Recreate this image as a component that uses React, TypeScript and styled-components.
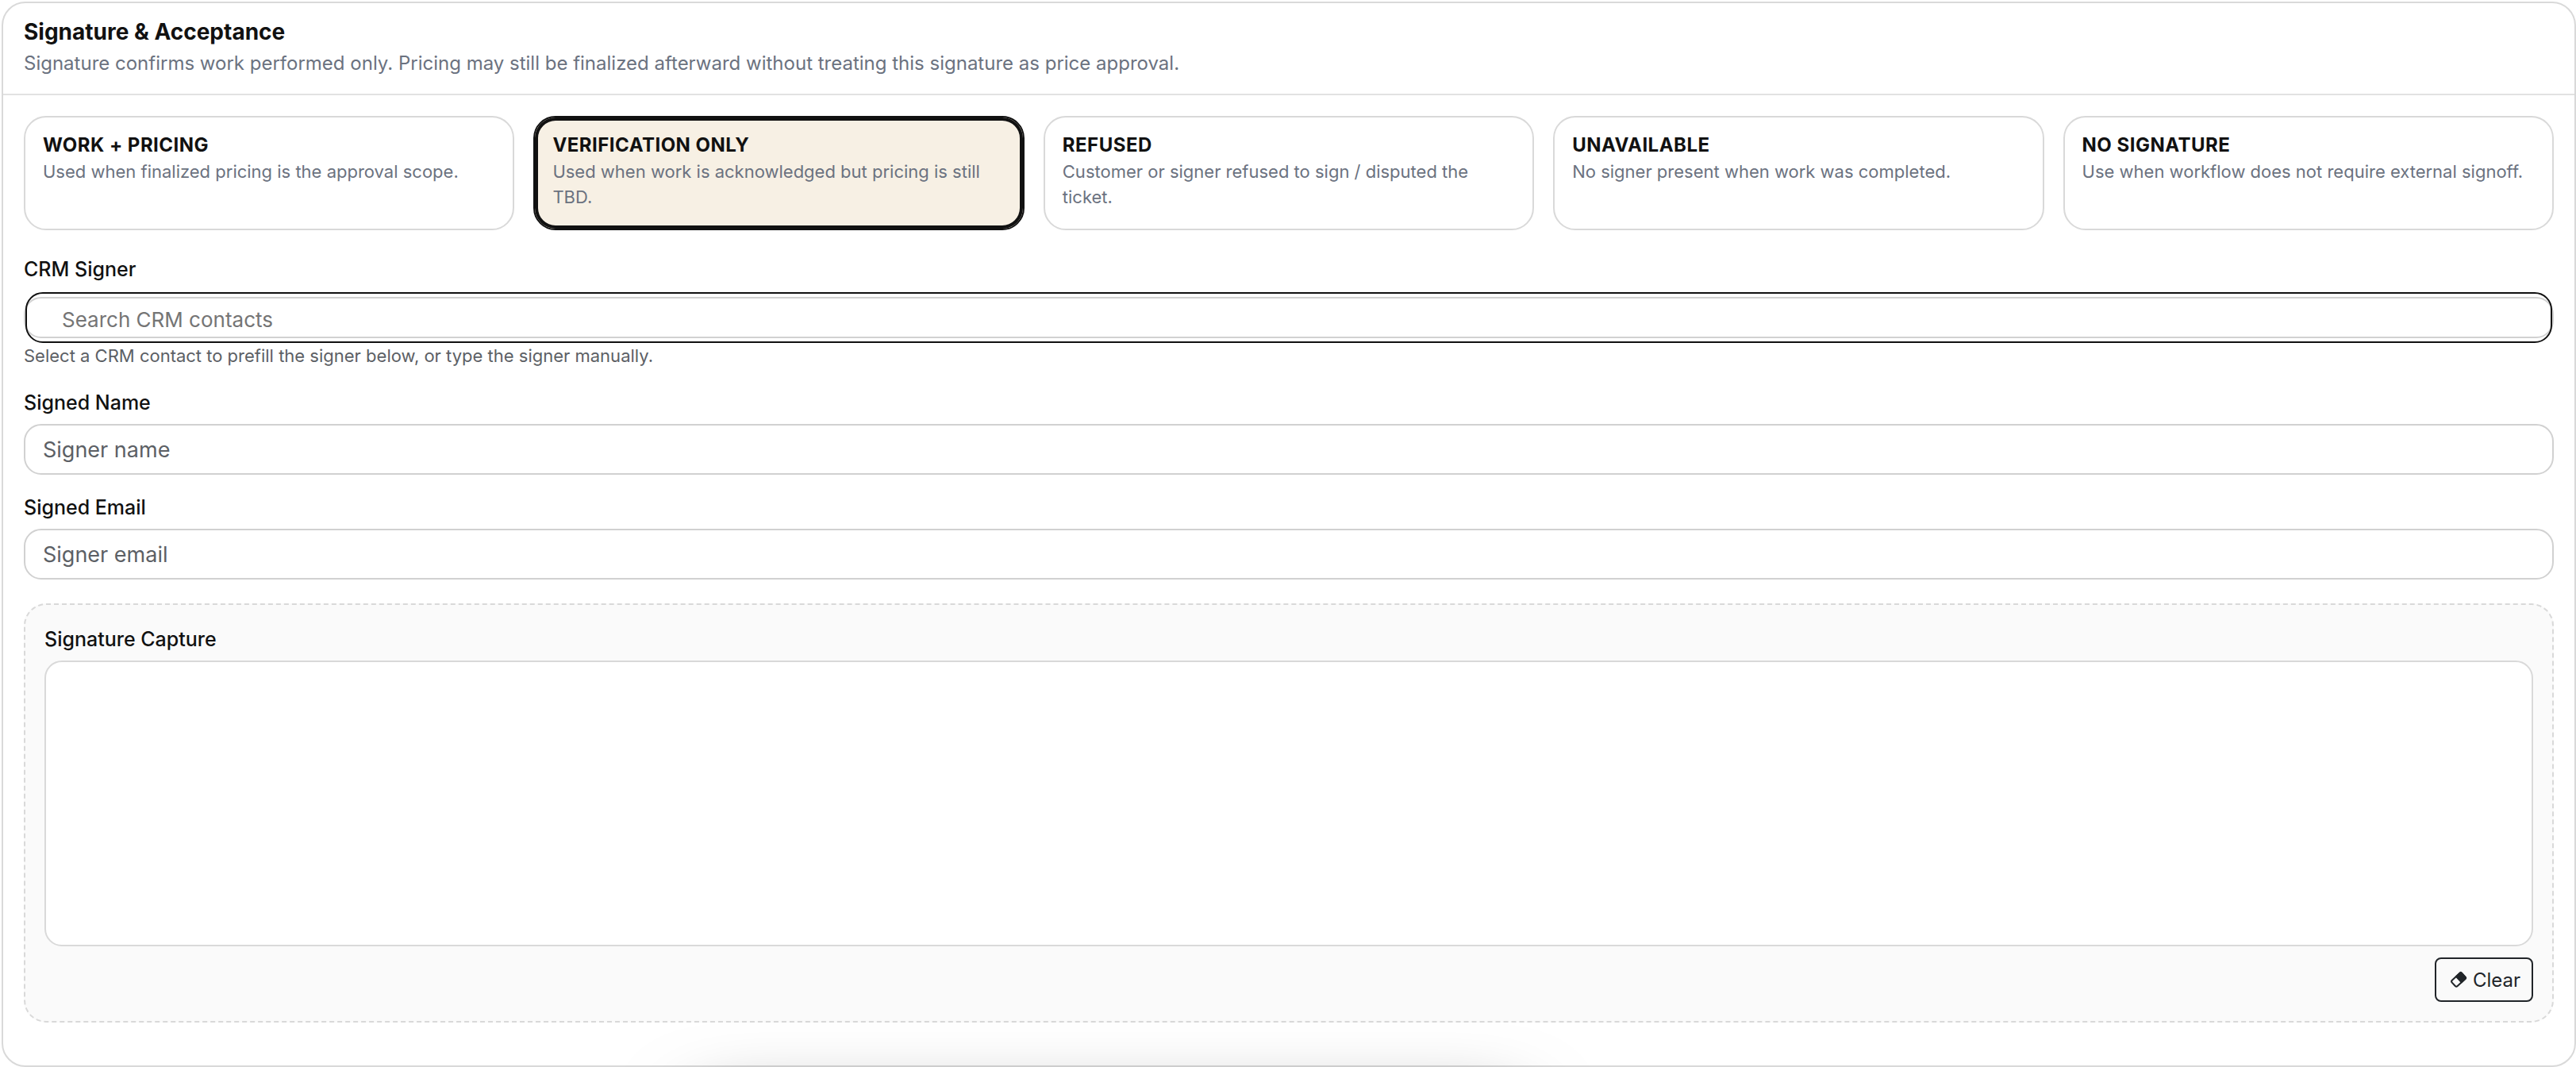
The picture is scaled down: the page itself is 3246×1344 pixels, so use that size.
import { useState } from "react";
import styled, { createGlobalStyle, css } from "styled-components";

const Ink = "#111111";
const Muted = "#6b7280";
const BorderSoft = "#d9d9d9";
const BorderInput = "#d1d1d1";

const TextS = "22px";
const TextM = "24px";
const TextLabel = "25px";
const TextL = "26px";
const TextInputSize = "27px";

const GlobalStyle = createGlobalStyle`
  *, *::before, *::after {
    box-sizing: border-box;
  }

  body {
    margin: 0;
    background: #ffffff;
    color: ${Ink};
    font-family: Inter, "Liberation Sans", sans-serif;
    font-size: ${TextM};
  }

  button, input {
    font-family: inherit;
  }
`;

const Page = styled.main`
  padding: 2px 0 0 2px;
`;

const Panel = styled.section`
  border: 2px solid ${BorderSoft};
  border-radius: 30px;
  background: #ffffff;
`;

const PanelHeader = styled.header`
  padding: 16px 26px 18px;
  border-bottom: 2px solid #e2e2e2;
`;

const Title = styled.h2`
  margin: 0;
  font-size: 28px;
  font-weight: 700;
  line-height: 40px;
`;

const Subtitle = styled.p`
  margin: 0;
  color: ${Muted};
  font-size: ${TextM};
  line-height: 40px;
`;

const PanelBody = styled.div`
  display: flex;
  flex-direction: column;
  padding: 26px 26px 54px;
`;

const Outcomes = styled.div`
  display: grid;
  grid-template-columns: repeat(5, minmax(0, 1fr));
  gap: 24px;
  margin-bottom: 8px;
`;

const OutcomeCard = styled.button<{ $selected: boolean }>`
  display: flex;
  flex-direction: column;
  justify-content: flex-start;
  min-height: 144px;
  padding: 18px 22px;
  border: 2px solid ${BorderSoft};
  border-radius: 28px;
  background: #ffffff;
  text-align: left;
  cursor: pointer;

  ${({ $selected }) =>
    $selected &&
    css`
      border-color: ${Ink};
      background: #f7f0e4;
      box-shadow: inset 0 0 0 4px ${Ink};
    `}
`;

const OutcomeTitle = styled.span`
  color: ${Ink};
  font-size: ${TextM};
  font-weight: 700;
  letter-spacing: 0.02em;
  line-height: 34px;
  text-transform: uppercase;
`;

const OutcomeText = styled.span`
  color: ${Muted};
  font-size: ${TextS};
  line-height: 32px;
`;

const Field = styled.div`
  display: flex;
  flex-direction: column;
  margin-top: 22px;
`;

const Label = styled.label`
  margin-bottom: 8px;
  font-size: ${TextLabel};
  font-weight: 500;
  line-height: 38px;
`;

const TextInput = styled.input`
  width: 100%;
  height: 64px;
  padding: 0 22px;
  border: 2px solid ${BorderInput};
  border-radius: 22px;
  background: #ffffff;
  color: ${Ink};
  font-size: ${TextInputSize};

  &::placeholder {
    color: #5c6065;
    opacity: 1;
  }
`;

const Combo = styled.div`
  display: flex;
  height: 52px;
  margin: 8px 0 6px;
  border: 2px solid ${BorderInput};
  border-radius: 22px;
`;

const ComboInput = styled(TextInput)`
  margin: -8px 0;
  padding: 4px 44px 0;
  border-color: ${Ink};
  background: transparent;
  font-size: ${TextL};

  &::placeholder {
    color: #757575;
  }
`;

const Hint = styled.p`
  margin: 0 0 2px;
  color: #5c6065;
  font-size: ${TextS};
  line-height: 32px;
`;

const Capture = styled.div`
  display: flex;
  flex-direction: column;
  margin-top: 30px;
  padding: 24px;
  border: 2px dashed ${BorderSoft};
  border-radius: 28px;
  background: #fafafa;
`;

const CaptureLabel = styled.span`
  margin-bottom: 8px;
  font-size: ${TextLabel};
  font-weight: 500;
  line-height: 38px;
`;

const Pad = styled.canvas`
  display: block;
  width: 100%;
  height: 360px;
  border: 2px solid ${BorderSoft};
  border-radius: 22px;
  background: #ffffff;
`;

const CaptureActions = styled.div`
  display: flex;
  justify-content: flex-end;
  margin-top: 14px;
`;

const ClearButton = styled.button`
  display: flex;
  align-items: center;
  gap: 6px;
  height: 56px;
  padding: 0 14px 0 16px;
  border: 2px solid #212529;
  border-radius: 8px;
  background: transparent;
  color: #212529;
  font-size: ${TextM};
  cursor: pointer;
`;

/* Floating bar docked just under the viewport, only its shadow shows. */
const DockedBar = styled.div`
  position: fixed;
  top: 100%;
  left: 27%;
  width: 32%;
  height: 200px;
  border-radius: 30px;
  box-shadow: 0 56px 96px rgba(0, 0, 0, 0.5);
  pointer-events: none;
`;

const outcomes = [
  {
    id: "work",
    title: "Work + Pricing",
    text: "Used when finalized pricing is the approval scope.",
  },
  {
    id: "verification",
    title: "Verification Only",
    text: "Used when work is acknowledged but pricing is still TBD.",
  },
  {
    id: "refused",
    title: "Refused",
    text: "Customer or signer refused to sign / disputed the ticket.",
  },
  {
    id: "unavailable",
    title: "Unavailable",
    text: "No signer present when work was completed.",
  },
  {
    id: "none",
    title: "No Signature",
    text: "Use when workflow does not require external signoff.",
  },
];

function EraserIcon() {
  return (
    <svg width="24" height="24" viewBox="0 0 24 24" aria-hidden="true">
      <g transform="rotate(-43 12 12)">
        <rect
          x="3.5"
          y="7"
          width="17"
          height="10"
          rx="2"
          fill="none"
          stroke="currentColor"
          strokeWidth="2"
        />
        <path
          d="M11.5 6h8a2 2 0 0 1 2 2v8a2 2 0 0 1-2 2h-8z"
          fill="currentColor"
        />
      </g>
    </svg>
  );
}

export default function App() {
  const [selected, setSelected] = useState("verification");

  return (
    <>
      <GlobalStyle />
      <Page>
        <Panel>
          <PanelHeader>
            <Title>Signature &amp; Acceptance</Title>
            <Subtitle>
              Signature confirms work performed only. Pricing may still be
              finalized afterward without treating this signature as price
              approval.
            </Subtitle>
          </PanelHeader>
          <PanelBody>
            <Outcomes>
              {outcomes.map((outcome) => (
                <OutcomeCard
                  key={outcome.id}
                  type="button"
                  $selected={outcome.id === selected}
                  aria-pressed={outcome.id === selected}
                  onClick={() => setSelected(outcome.id)}
                >
                  <OutcomeTitle>{outcome.title}</OutcomeTitle>
                  <OutcomeText>{outcome.text}</OutcomeText>
                </OutcomeCard>
              ))}
            </Outcomes>
            <Field>
              <Label htmlFor="crm-signer">CRM Signer</Label>
              <Combo>
                <ComboInput
                  id="crm-signer"
                  type="text"
                  placeholder="Search CRM contacts"
                />
              </Combo>
              <Hint>
                Select a CRM contact to prefill the signer below, or type the
                signer manually.
              </Hint>
            </Field>
            <Field>
              <Label htmlFor="signed-name">Signed Name</Label>
              <TextInput
                id="signed-name"
                type="text"
                placeholder="Signer name"
              />
            </Field>
            <Field>
              <Label htmlFor="signed-email">Signed Email</Label>
              <TextInput
                id="signed-email"
                type="email"
                placeholder="Signer email"
              />
            </Field>
            <Capture>
              <CaptureLabel id="capture-label">Signature Capture</CaptureLabel>
              <Pad aria-labelledby="capture-label" />
              <CaptureActions>
                <ClearButton type="button">
                  <EraserIcon />
                  Clear
                </ClearButton>
              </CaptureActions>
            </Capture>
          </PanelBody>
        </Panel>
      </Page>
      <DockedBar />
    </>
  );
}
